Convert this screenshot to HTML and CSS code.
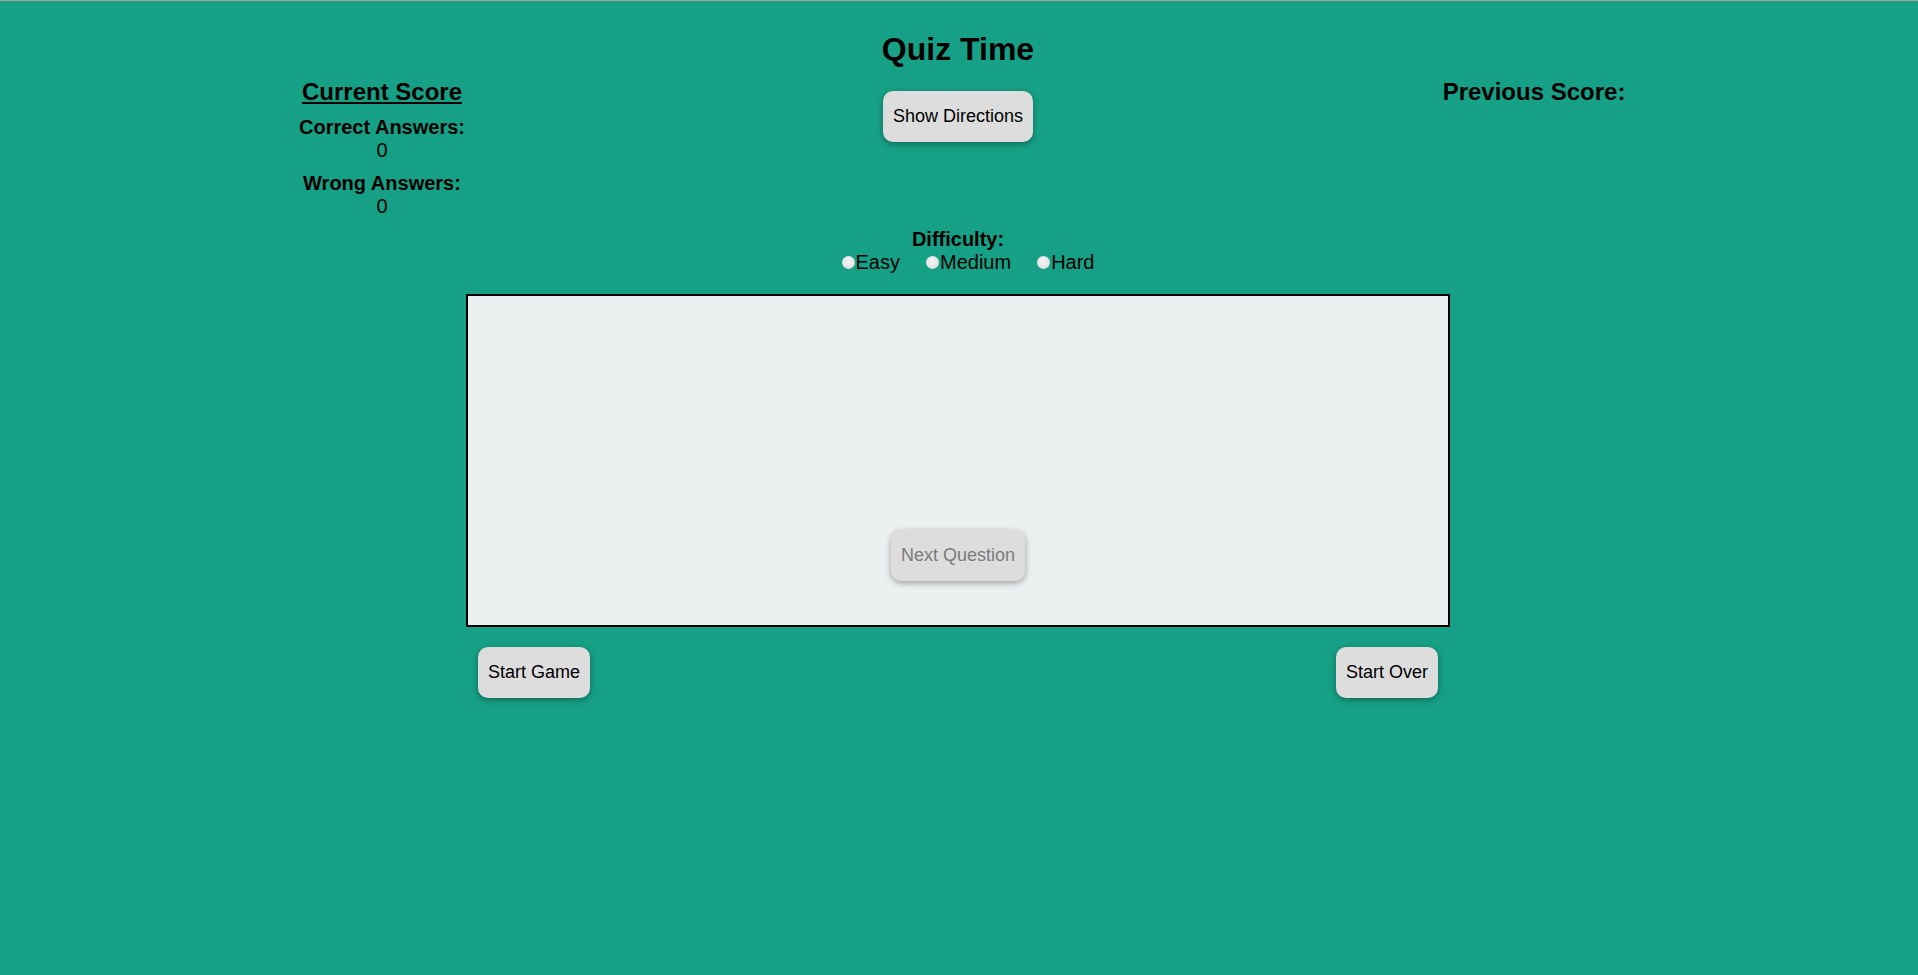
FILE: index.html
```html
<!DOCTYPE html>
<html lang="en">
<head>
<meta charset="utf-8">
<title>Quiz Time</title>
<link rel="stylesheet" href="styles.css">
</head>
<body>
  <h1 class="title">Quiz Time</h1>
  <div class="top-row">
    <div class="score-col">
      <h2 class="score-heading underlined">Current Score</h2>
      <div class="stat">
        <div class="stat-label">Correct Answers:</div>
        <div class="stat-value">0</div>
      </div>
      <div class="stat">
        <div class="stat-label">Wrong Answers:</div>
        <div class="stat-value">0</div>
      </div>
    </div>
    <div class="middle-col">
      <button class="btn">Show Directions</button>
    </div>
    <div class="score-col">
      <h2 class="score-heading">Previous Score:</h2>
    </div>
  </div>
  <div class="difficulty">
    <div class="difficulty-label">Difficulty:</div>
    <div class="radio-group">
      <label class="radio-item"><input type="radio" name="diff" class="radio">Easy</label>
      <label class="radio-item"><input type="radio" name="diff" class="radio">Medium</label>
      <label class="radio-item"><input type="radio" name="diff" class="radio">Hard</label>
    </div>
  </div>
  <div class="quiz-box">
    <button class="btn btn-disabled" disabled>Next Question</button>
  </div>
  <div class="bottom-row">
    <button class="btn">Start Game</button>
    <button class="btn">Start Over</button>
  </div>
</body>
</html>
```

FILE: styles.css
```css
html, body {
  height: 100%;
}
body {
  margin: 0;
  padding-right: 2px;
  background: #16a085;
  border-top: 1px solid #a4a4a4;
  box-sizing: border-box;
  font-family: "Liberation Sans", Arial, sans-serif;
  color: #000;
}
.title {
  margin: 30px 0 0;
  font-size: 32px;
  font-weight: bold;
  text-align: center;
  line-height: normal;
}
.top-row {
  width: 1452px;
  margin: 10px auto 0;
  display: grid;
  grid-template-columns: 300px 1fr 300px;
}
.score-col {
  display: flex;
  flex-direction: column;
  align-items: center;
  text-align: center;
}
.score-heading {
  margin: 0;
  font-size: 24px;
  font-weight: bold;
  line-height: normal;
}
.underlined {
  text-decoration: underline;
}
.stat {
  margin-top: 10px;
  font-size: 20px;
  line-height: normal;
}
.stat-label {
  font-weight: bold;
}
.middle-col {
  display: flex;
  justify-content: center;
  align-items: flex-start;
  padding-top: 13px;
}
.btn {
  font-family: "Liberation Sans", Arial, sans-serif;
  font-size: 18px;
  line-height: normal;
  color: #000;
  background: #dddddd;
  border: none;
  border-radius: 10px;
  padding: 15px 10px;
  box-shadow: 0 2px 6px rgba(0, 0, 0, 0.35);
  cursor: pointer;
}
.btn-disabled {
  color: #7b7b7b;
  cursor: default;
}
.difficulty {
  margin-top: 10px;
  text-align: center;
  font-size: 20px;
  line-height: normal;
}
.difficulty-label {
  font-weight: bold;
}
.radio-group {
  display: flex;
  justify-content: center;
  gap: 26px;
  padding-left: 20px;
}
.radio-item {
  display: flex;
  align-items: center;
  gap: 1px;
}
.radio {
  appearance: none;
  -webkit-appearance: none;
  margin: 0;
  width: 13px;
  height: 13px;
  border-radius: 50%;
  background: radial-gradient(circle at 45% 40%, #f4f4f4 0%, #e6e6e6 55%, #c4c4c4 100%);
  border: none;
}
.quiz-box {
  width: 984px;
  height: 333px;
  box-sizing: border-box;
  margin: 20px auto 0;
  background: #ecf0f1;
  border: 2px solid #000;
  display: flex;
  flex-direction: column;
  align-items: center;
  justify-content: flex-end;
  padding-bottom: 44px;
}
.bottom-row {
  width: 984px;
  box-sizing: border-box;
  margin: 20px auto 0;
  padding: 0 12px;
  display: flex;
  justify-content: space-between;
}
```
